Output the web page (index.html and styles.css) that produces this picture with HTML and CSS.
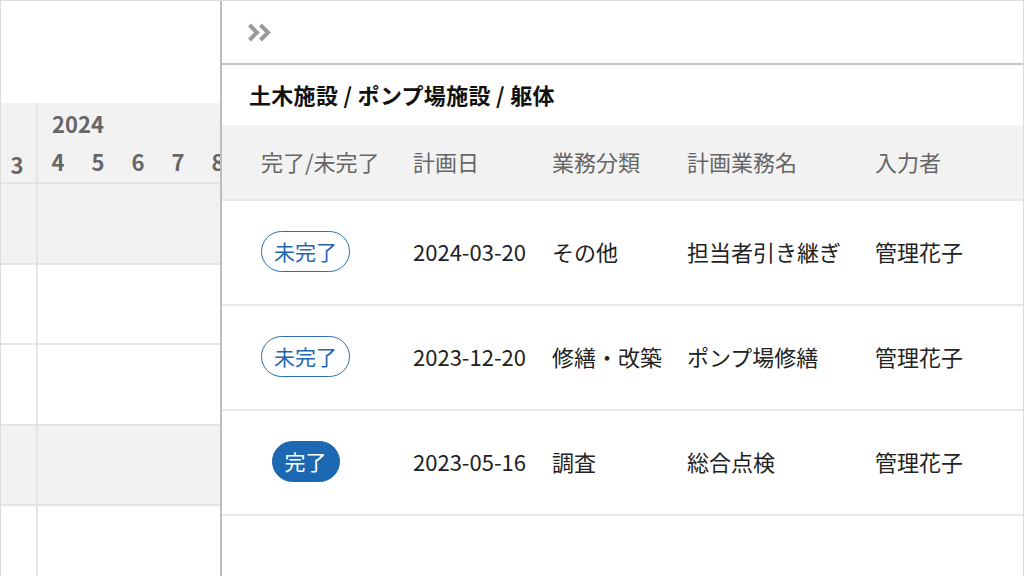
FILE: index.html
```html
<!DOCTYPE html>
<html lang="ja">

<head>
    <meta charset="UTF-8">
    <meta name="viewport" content="width=device-width, initial-scale=1.0">
    <title>計画業務</title>

    <link rel="stylesheet" href="styles.css">
</head>

<body>
    <div class="screen">
        <div class="gantt">
            <div class="gantt-top"></div>

            <div class="gantt-head">
                <div class="gantt-prev">
                    <span class="month">3</span>
                </div>
                <div class="gantt-year">
                    <div class="year">2024</div>
                    <div class="months">
                        <span class="month">4</span>
                        <span class="month">5</span>
                        <span class="month">6</span>
                        <span class="month">7</span>
                        <span class="month">8</span>
                    </div>
                </div>
            </div>

            <div class="gantt-row shaded"><div class="gantt-prev"></div><div></div></div>
            <div class="gantt-row"><div class="gantt-prev"></div><div></div></div>
            <div class="gantt-row"><div class="gantt-prev"></div><div></div></div>
            <div class="gantt-row shaded"><div class="gantt-prev"></div><div></div></div>
            <div class="gantt-row last"><div class="gantt-prev"></div><div></div></div>
        </div>

        <div class="panel">
            <div class="toolbar">
                <button class="collapse-button">
                    <svg width="25" height="19" viewBox="0 0 25 19">
                        <path d="M2.5 2l7.5 7.5-7.5 7.5M13.5 2l7.5 7.5-7.5 7.5" fill="none" stroke="#9a9a9a" stroke-width="4" />
                    </svg>
                </button>
            </div>

            <div class="title">土木施設 / ポンプ場施設 / 躯体</div>

            <div class="table">
                <div class="row head">
                    <div class="cell status">完了/未完了</div>
                    <div class="cell">計画日</div>
                    <div class="cell">業務分類</div>
                    <div class="cell">計画業務名</div>
                    <div class="cell">入力者</div>
                </div>

                <div class="row">
                    <div class="cell status"><span class="badge">未完了</span></div>
                    <div class="cell">2024-03-20</div>
                    <div class="cell">その他</div>
                    <div class="cell">担当者引き継ぎ</div>
                    <div class="cell">管理花子</div>
                </div>

                <div class="row">
                    <div class="cell status"><span class="badge">未完了</span></div>
                    <div class="cell">2023-12-20</div>
                    <div class="cell">修繕・改築</div>
                    <div class="cell">ポンプ場修繕</div>
                    <div class="cell">管理花子</div>
                </div>

                <div class="row">
                    <div class="cell status"><span class="badge done">完了</span></div>
                    <div class="cell">2023-05-16</div>
                    <div class="cell">調査</div>
                    <div class="cell">総合点検</div>
                    <div class="cell">管理花子</div>
                </div>
            </div>
        </div>
    </div>
</body>

</html>
```

FILE: styles.css
```css
* {
    box-sizing: border-box;
}

body {
    margin: 0;
    background: #fff;
    font-family: "Noto Sans CJK JP", "Noto Sans", sans-serif;
    color: #222;
    overflow: hidden;
}

.screen {
    display: flex;
    width: 1024px;
    height: 576px;
    border-top: 1px solid #dcdcdc;
}

/* gantt side */
.gantt {
    width: 220px;
    flex: none;
    border-left: 1px solid #dcdcdc;
    overflow: hidden;
}

.gantt-top {
    height: 102px;
}

.gantt-head,
.gantt-row {
    display: grid;
    grid-template-columns: 37px 1fr;
    border-bottom: 2px solid #e4e4e4;
}

.gantt-head {
    height: 81px;
    background-color: #f2f2f2;
    color: #666;
    font-weight: bold;
    font-size: 22px;
}

.gantt-prev {
    border-right: 2px solid #e4e4e4;
}

.gantt-head .gantt-prev {
    display: flex;
    align-items: flex-end;
    padding-bottom: 4px;
}

.gantt-head .gantt-prev .month {
    width: 32px;
}

.year {
    height: 28px;
    line-height: 28px;
    margin-top: 6px;
    padding-left: 14px;
}

.months {
    display: flex;
    margin-top: 10px;
}

.month {
    width: 40px;
    flex: none;
    height: 28px;
    line-height: 28px;
    text-align: center;
}

.gantt-row {
    height: 80.5px;
}

.gantt-row.shaded {
    background-color: #f2f2f2;
}

.gantt-row.last {
    height: 80px;
    border-bottom: none;
}

/* detail panel */
.panel {
    flex: 1;
    border-left: 2px solid #bdbdbd;
    border-right: 1px solid #dcdcdc;
    display: flex;
    flex-direction: column;
}

.toolbar {
    height: 64px;
    border-bottom: 2px solid #c4c4c4;
    display: flex;
    align-items: center;
    padding-left: 25px;
}

.collapse-button {
    border: none;
    background: transparent;
    padding: 0;
    display: flex;
    cursor: pointer;
}

.title {
    height: 60px;
    display: flex;
    align-items: center;
    padding-left: 27px;
    padding-bottom: 3px;
    font-size: 22px;
    font-weight: bold;
    color: #111;
    letter-spacing: 0.3px;
}

.row {
    display: grid;
    grid-template-columns: 167px 139px 135px 188px 1fr;
    height: 105px;
    border-bottom: 2px solid #e8e8e8;
    align-items: center;
    padding-bottom: 3px;
    font-size: 22px;
}

.row.head {
    height: 76px;
    background-color: #f2f2f2;
    color: #666;
}

.cell {
    padding-left: 24px;
    white-space: nowrap;
}

.row .status {
    padding-left: 0;
    text-align: center;
}

.row.head .status {
    padding-left: 39px;
    text-align: left;
}

.badge {
    display: inline-block;
    height: 41px;
    line-height: 38px;
    padding: 0 12px;
    border: 1.5px solid #2a6fb6;
    border-radius: 21px;
    color: #1f66b0;
    font-size: 21px;
}

.badge.done {
    background-color: #1c68b3;
    border-color: #1c68b3;
    color: #fff;
}
```
